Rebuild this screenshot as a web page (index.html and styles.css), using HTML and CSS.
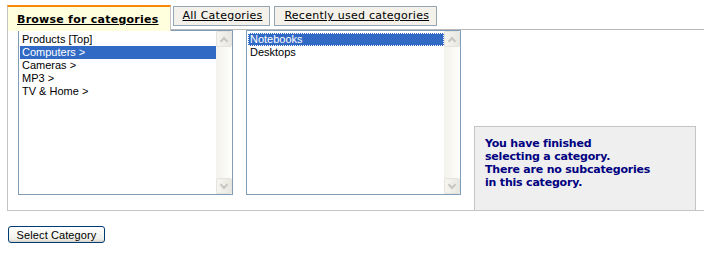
FILE: index.html
```html
<!DOCTYPE html>
<html lang="en">
<head>
    <meta charset="UTF-8">
    <title>Select Category</title>
    <link rel="stylesheet" href="styles.css">
</head>
<body>
    <div class="tabs">
        <a class="tab active">Browse for categories</a>
        <a class="tab">All Categories</a>
        <a class="tab">Recently used categories</a>
    </div>

    <div class="panel">
        <div class="listbox">
            <ul class="items">
                <li>Products [Top]</li>
                <li class="selected">Computers &gt;</li>
                <li>Cameras &gt;</li>
                <li>MP3 &gt;</li>
                <li>TV &amp; Home &gt;</li>
            </ul>
            <div class="scrollbar">
                <span class="arrow up"></span>
                <span class="track"></span>
                <span class="arrow down"></span>
            </div>
        </div>

        <div class="listbox">
            <ul class="items">
                <li class="selected focused">Notebooks</li>
                <li>Desktops</li>
            </ul>
            <div class="scrollbar">
                <span class="arrow up"></span>
                <span class="track"></span>
                <span class="arrow down"></span>
            </div>
        </div>

        <div class="info">
            You have finished<br>
            selecting a category.<br>
            There are no subcategories<br>
            in this category.
        </div>
    </div>

    <button class="select-btn">Select Category</button>
</body>
</html>
```

FILE: styles.css
```css
body {
    margin: 0;
    padding: 5px 0 0 7px;
    font-family: Tahoma, "DejaVu Sans", sans-serif;
    font-size: 11px;
    background: #fff;
    overflow: hidden;
}

/* Tabs */
.tabs {
    display: flex;
    align-items: flex-start;
    height: 24px;
}

.tab {
    display: block;
    font-family: "DejaVu Sans", Verdana, sans-serif;
    font-size: 11px;
    letter-spacing: 0.25px;
    color: #000;
    text-decoration: underline;
    background: #f3f1ea;
    border: 1px solid #94a6b6;
    padding: 2px 7px 3px 9px;
    margin: 1px 0 0 4px;
}

.tab.active {
    font-weight: bold;
    background: #ffffdd;
    border: 1px solid #c4c4c4;
    border-top: 2px solid #f7880a;
    border-bottom: none;
    margin: 0;
    padding: 6px 11px 5px 9px;
    position: relative;
    z-index: 1;
}

.tab.active + .tab {
    margin-left: 2px;
}

/* Panel */
.panel {
    display: flex;
    align-items: flex-end;
    gap: 13px;
    width: 720px;
    height: 182px;
    border-top: 1px solid #b8b8b8;
    border-left: 1px solid #c4c4c4;
    border-bottom: 1px solid #c4c4c4;
    padding-left: 10px;
    box-sizing: border-box;
}

.listbox {
    align-self: flex-start;
    display: flex;
    width: 215px;
    height: 165px;
    border: 1px solid #7f9db9;
    box-sizing: border-box;
    background: #fff;
}

.items {
    flex: 1;
    list-style: none;
    margin: 0;
    padding: 2px 0 0 1px;
    font-family: "Liberation Sans", Arial, sans-serif;
    font-size: 11px;
}

.items li {
    height: 13px;
    line-height: 13px;
    padding-left: 2px;
    color: #000;
}

.items li.selected {
    background: #316ac5;
    color: #fff;
}

.items li.focused {
    outline: 1px dotted #fff;
    outline-offset: -1px;
}

.listbox:last-of-type .items {
    padding-top: 1px;
}

/* XP style scrollbar */
.scrollbar {
    width: 16px;
    display: flex;
    flex-direction: column;
    background: linear-gradient(to right, #f3f2ec, #fefefb);
}

.track {
    flex: 1;
}

.arrow {
    height: 16px;
    box-sizing: border-box;
    border: 1px solid #e4e3dc;
    border-radius: 2px;
    background: linear-gradient(to right, #f6f5f0, #e8e7e0);
    position: relative;
}

.arrow::after {
    content: "";
    position: absolute;
    left: 4px;
    width: 4px;
    height: 4px;
    border-left: 2px solid #c8c7c0;
    border-top: 2px solid #c8c7c0;
}

.arrow.up::after {
    top: 6px;
    transform: rotate(45deg);
}

.arrow.down::after {
    top: 3px;
    transform: rotate(225deg);
}

.info {
    width: 222px;
    height: 85px;
    box-sizing: border-box;
    margin-bottom: -1px;
    background: #efefef;
    border: 1px solid #c4c4c4;
    padding: 10px 0 0 10px;
    font-family: Tahoma, "DejaVu Sans", sans-serif;
    font-weight: bold;
    font-size: 11px;
    letter-spacing: -0.2px;
    line-height: 13px;
    color: #000080;
}

/* Button */
.select-btn {
    display: block;
    margin-top: 15px;
    margin-left: 1px;
    width: 97px;
    height: 17px;
    padding: 0;
    font-family: "Liberation Sans", Arial, sans-serif;
    font-size: 11px;
    letter-spacing: 0.1px;
    color: #000;
    border: 1px solid #003c74;
    border-radius: 3px;
    background: linear-gradient(#ffffff, #f0f0ea 80%, #d6d0c5);
}
```
